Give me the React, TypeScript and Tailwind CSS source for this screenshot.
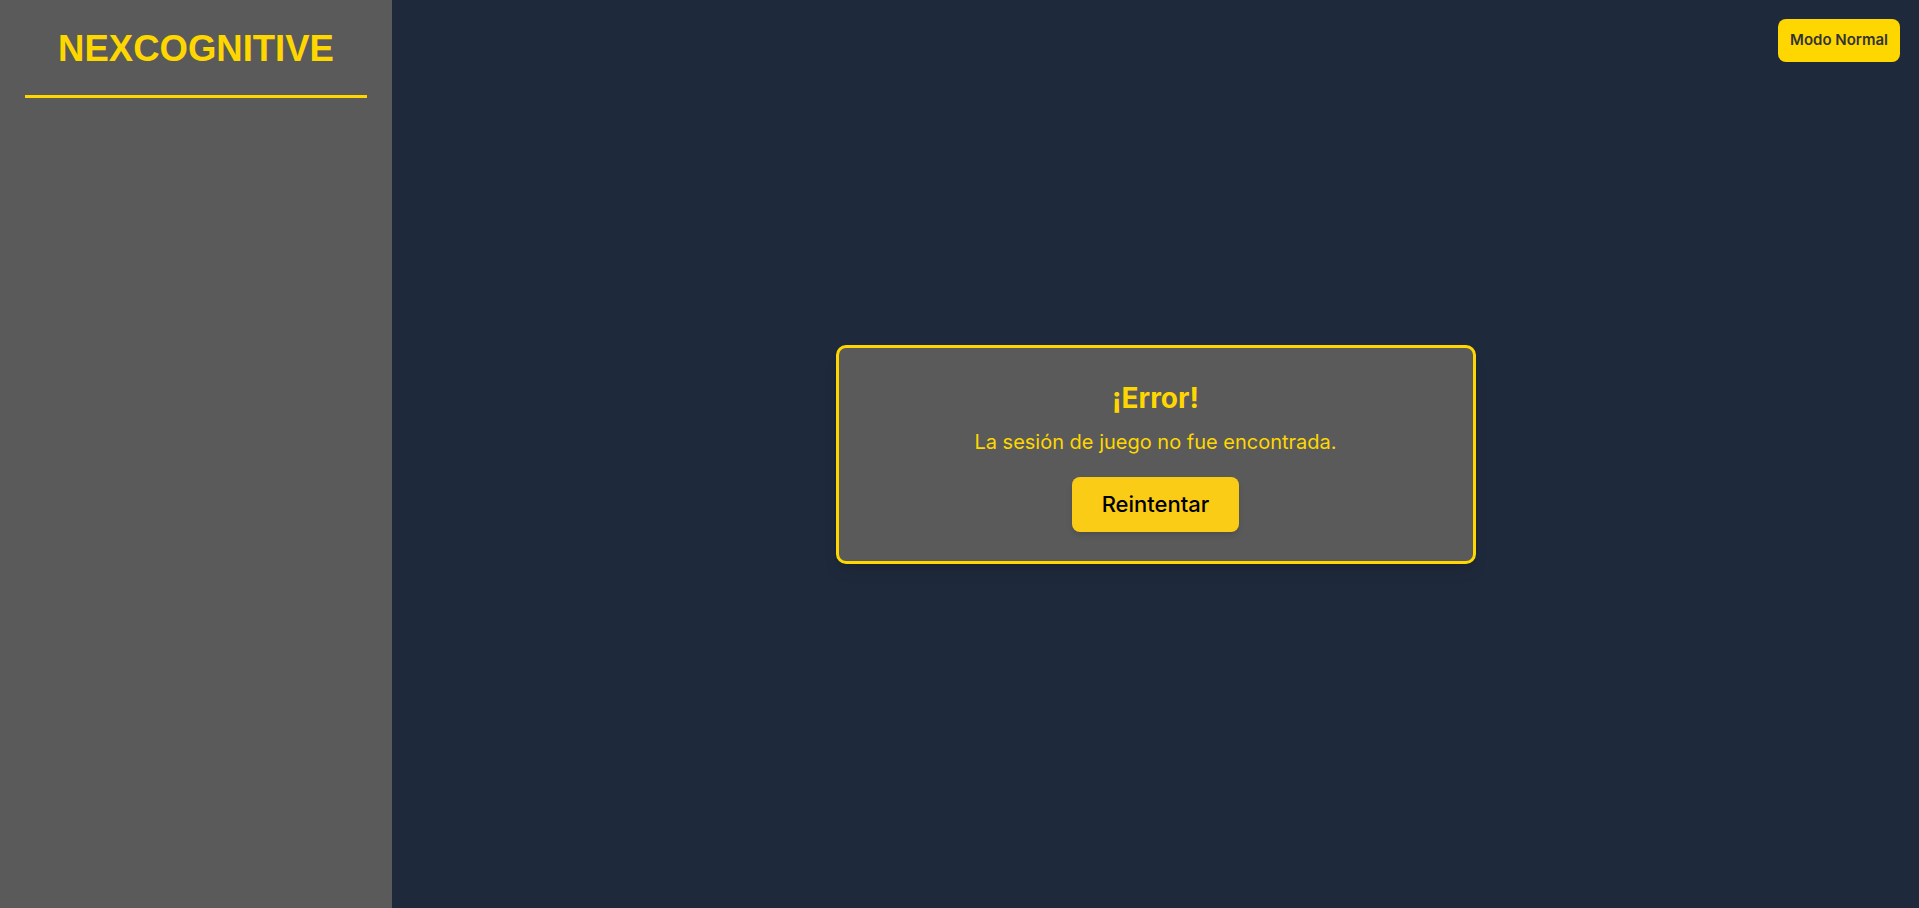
const App = () => {
  return (
    <div className="flex h-screen w-full bg-[#1e293b] font-['Inter',sans-serif]">
      {/* sidebar */}
      <aside className="w-[392px] shrink-0 bg-[#5a5a5a] px-[25px] pt-[29px]">
        <h1 className="text-center font-['Liberation_Sans',Arial,sans-serif] text-[36.5px] font-bold leading-10 text-[#ffd700]">
          NEXCOGNITIVE
        </h1>
        <div className="mt-[26px] h-[3px] bg-[#ffd700]" />
      </aside>

      {/* main */}
      <main className="relative flex flex-1 items-center justify-center">
        <button className="absolute right-[19px] top-[19px] h-[43px] rounded-lg bg-[#ffd700] px-3 text-[15px] font-semibold text-[#333]">
          Modo Normal
        </button>

        <div className="w-[640px] rounded-[10px] border-[3px] border-[#ffd700] bg-[#5a5a5a] px-8 pb-[29px] pt-8 text-center shadow-lg">
          <h2 className="mb-3 text-[28px] font-bold leading-9 text-[#ffd700]">¡Error!</h2>
          <p className="mb-[21px] text-xl text-[#ffd700]">
            La sesión de juego no fue encontrada.
          </p>
          <button className="rounded-lg bg-[#facc15] px-[30px] py-3 text-[22px] font-medium leading-[31px] text-black shadow-md">
            Reintentar
          </button>
        </div>
      </main>
    </div>
  );
};

export default App;
